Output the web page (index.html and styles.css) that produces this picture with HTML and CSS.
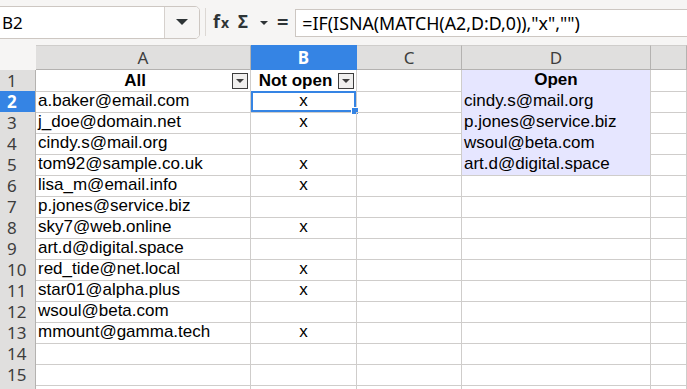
FILE: index.html
```html
<!DOCTYPE html>
<html lang="en">
<head>
    <meta charset="UTF-8">
    <title>Sheet</title>
    <link rel="stylesheet" href="styles.css">
</head>
<body>
    <div class="toolbar">
        <div class="namebox">
            <span class="name">B2</span>
            <span class="drop"><span class="tri"></span></span>
        </div>
        <span class="sep"></span>
        <span class="fx">f<small>x</small></span>
        <span class="sigma">Σ</span>
        <span class="small-tri"></span>
        <span class="eq">=</span>
        <div class="formula">=IF(ISNA(MATCH(A2,D:D,0)),"x","")</div>
    </div>

    <div class="sheet">
        <div class="row head">
            <div class="corner"></div>
            <div class="ch">A</div>
            <div class="ch active">B</div>
            <div class="ch">C</div>
            <div class="ch">D</div>
            <div class="ch"></div>
        </div>
        <div class="row">
            <div class="rh">1</div>
            <div class="c hd"><span class="label">All</span><span class="filter"></span></div>
            <div class="c hd"><span class="label">Not open</span><span class="filter"></span></div>
            <div class="c"></div>
            <div class="c open bold center">Open</div>
            <div class="c"></div>
        </div>
        <div class="row">
            <div class="rh active">2</div>
            <div class="c">a.baker@email.com</div>
            <div class="c center selected">x</div>
            <div class="c"></div>
            <div class="c open">cindy.s@mail.org</div>
            <div class="c"></div>
        </div>
        <div class="row">
            <div class="rh">3</div>
            <div class="c">j_doe@domain.net</div>
            <div class="c center">x</div>
            <div class="c"></div>
            <div class="c open">p.jones@service.biz</div>
            <div class="c"></div>
        </div>
        <div class="row">
            <div class="rh">4</div>
            <div class="c">cindy.s@mail.org</div>
            <div class="c center"></div>
            <div class="c"></div>
            <div class="c open">wsoul@beta.com</div>
            <div class="c"></div>
        </div>
        <div class="row">
            <div class="rh">5</div>
            <div class="c">tom92@sample.co.uk</div>
            <div class="c center">x</div>
            <div class="c"></div>
            <div class="c open last">art.d@digital.space</div>
            <div class="c"></div>
        </div>
        <div class="row">
            <div class="rh">6</div>
            <div class="c">lisa_m@email.info</div>
            <div class="c center">x</div>
            <div class="c"></div>
            <div class="c"></div>
            <div class="c"></div>
        </div>
        <div class="row">
            <div class="rh">7</div>
            <div class="c">p.jones@service.biz</div>
            <div class="c center"></div>
            <div class="c"></div>
            <div class="c"></div>
            <div class="c"></div>
        </div>
        <div class="row">
            <div class="rh">8</div>
            <div class="c">sky7@web.online</div>
            <div class="c center">x</div>
            <div class="c"></div>
            <div class="c"></div>
            <div class="c"></div>
        </div>
        <div class="row">
            <div class="rh">9</div>
            <div class="c">art.d@digital.space</div>
            <div class="c center"></div>
            <div class="c"></div>
            <div class="c"></div>
            <div class="c"></div>
        </div>
        <div class="row">
            <div class="rh">10</div>
            <div class="c">red_tide@net.local</div>
            <div class="c center">x</div>
            <div class="c"></div>
            <div class="c"></div>
            <div class="c"></div>
        </div>
        <div class="row">
            <div class="rh">11</div>
            <div class="c">star01@alpha.plus</div>
            <div class="c center">x</div>
            <div class="c"></div>
            <div class="c"></div>
            <div class="c"></div>
        </div>
        <div class="row">
            <div class="rh">12</div>
            <div class="c">wsoul@beta.com</div>
            <div class="c center"></div>
            <div class="c"></div>
            <div class="c"></div>
            <div class="c"></div>
        </div>
        <div class="row">
            <div class="rh">13</div>
            <div class="c">mmount@gamma.tech</div>
            <div class="c center">x</div>
            <div class="c"></div>
            <div class="c"></div>
            <div class="c"></div>
        </div>
        <div class="row">
            <div class="rh">14</div>
            <div class="c"></div>
            <div class="c"></div>
            <div class="c"></div>
            <div class="c"></div>
            <div class="c"></div>
        </div>
        <div class="row">
            <div class="rh">15</div>
            <div class="c"></div>
            <div class="c"></div>
            <div class="c"></div>
            <div class="c"></div>
            <div class="c"></div>
        </div>
        <div class="row">
            <div class="rh"></div>
            <div class="c"></div>
            <div class="c"></div>
            <div class="c"></div>
            <div class="c"></div>
            <div class="c"></div>
        </div>
    </div>
</body>
</html>
```

FILE: styles.css
```css
html, body {
    margin: 0;
    height: 100%;
    overflow: hidden;
}

body {
    background-color: #f6f5f4;
    font-family: 'Liberation Sans', Arial, sans-serif;
    color: #000;
}

.toolbar {
    display: flex;
    align-items: center;
    height: 45px;
    box-sizing: border-box;
    padding-bottom: 7px;
    font-family: 'Noto Sans', sans-serif;
    color: #2e3436;
}

.namebox {
    display: flex;
    margin-left: -6px;
    margin-top: 6px;
    width: 206px;
    height: 33px;
    box-sizing: border-box;
    border: 1px solid #cdc7c2;
    border-radius: 5px;
    background-color: #fff;
    overflow: hidden;
}

.namebox .name {
    flex: 1;
    padding-left: 7px;
    font-size: 17px;
    line-height: 31px;
    color: #000;
}

.namebox .drop {
    width: 34px;
    border-left: 1px solid #d6d1cd;
    background-color: #f6f5f4;
    display: flex;
    align-items: center;
    justify-content: center;
}

.tri {
    width: 0;
    height: 0;
    border-left: 6px solid transparent;
    border-right: 6px solid transparent;
    border-top: 6px solid #2e3436;
}

.sep {
    width: 1px;
    height: 28px;
    margin: 6px 7px 0 5px;
    background-color: #dcd8d4;
}

.fx {
    font-weight: bold;
    font-size: 18px;
    margin-top: 4px;
    margin-right: 8px;
    letter-spacing: 1px;
}

.fx small {
    font-size: 14px;
}

.sigma {
    font-weight: bold;
    font-size: 17px;
    margin-top: 5px;
}

.small-tri {
    width: 0;
    height: 0;
    margin: 8px 9px 0 12px;
    border-left: 4px solid transparent;
    border-right: 4px solid transparent;
    border-top: 4px solid #2e3436;
}

.eq {
    font-weight: bold;
    font-size: 20px;
    margin-top: 4px;
    margin-right: 7px;
}

.formula {
    flex: 1;
    height: 28px;
    margin-top: 7px;
    box-sizing: border-box;
    border: 1px solid #cdc7c2;
    border-right: none;
    background-color: #fff;
    padding-left: 6px;
    font-size: 17.8px;
    line-height: 26px;
    color: #000;
    white-space: nowrap;
}

.sheet {
    background-color: #fff;
}

.row {
    display: grid;
    grid-template-columns: 36px 215px 106px 105px 189px 1fr;
    height: 21px;
}

.row.head {
    height: 25px;
    background-color: #f6f5f4;
}

.corner {
    background-color: #f6f5f4;
}

.ch {
    background-color: #e0dfde;
    border-top: 1px solid #cfcdcb;
    border-right: 1px solid #b4b2b0;
    border-bottom: 1px solid #b4b2b0;
    box-sizing: border-box;
    text-align: center;
    font-family: 'Noto Sans', sans-serif;
    font-size: 17px;
    line-height: 23px;
    color: #3d3d3d;
}

.ch.active {
    background-color: #3584e4;
    border-color: #3584e4;
    color: #fff;
    font-weight: bold;
}

.rh {
    background-color: #e0dfde;
    border-right: 1px solid #b4b2b0;
    border-bottom: 1px solid #cfcdcb;
    box-sizing: border-box;
    padding-left: 7px;
    font-family: 'Noto Sans', sans-serif;
    font-size: 17px;
    line-height: 21px;
    color: #3d3d3d;
}

.rh.active {
    background-color: #3584e4;
    border-bottom-color: #3584e4;
    color: #fff;
    font-weight: bold;
}

.c {
    position: relative;
    border-right: 1px solid #cfcdcb;
    border-bottom: 1px solid #cfcdcb;
    box-sizing: border-box;
    padding-left: 2px;
    font-size: 17px;
    line-height: 20px;
    white-space: nowrap;
}

.center {
    text-align: center;
    padding-left: 0;
}

.bold {
    font-weight: bold;
}

.hd {
    display: flex;
    align-items: center;
    font-weight: bold;
    padding-right: 2px;
}

.hd .label {
    flex: 1;
    text-align: center;
}

.filter {
    position: relative;
    width: 16px;
    height: 16px;
    box-sizing: border-box;
    border: 1px solid #3d3d3d;
    background-color: #f0efee;
}

.filter::after {
    content: '';
    position: absolute;
    left: 3px;
    top: 5px;
    border-left: 4px solid transparent;
    border-right: 4px solid transparent;
    border-top: 4px solid #3d3d3d;
}

.open {
    background-color: #e6e6ff;
    border-bottom-color: #e6e6ff;
}

.open.last {
    border-bottom-color: #cfcdcb;
}

.selected {
    box-shadow: inset 0 0 0 2px #3584e4;
}

.selected::after {
    content: '';
    position: absolute;
    right: -3px;
    bottom: -3px;
    width: 6px;
    height: 6px;
    background-color: #3584e4;
    border: 1px solid #fff;
}
```
